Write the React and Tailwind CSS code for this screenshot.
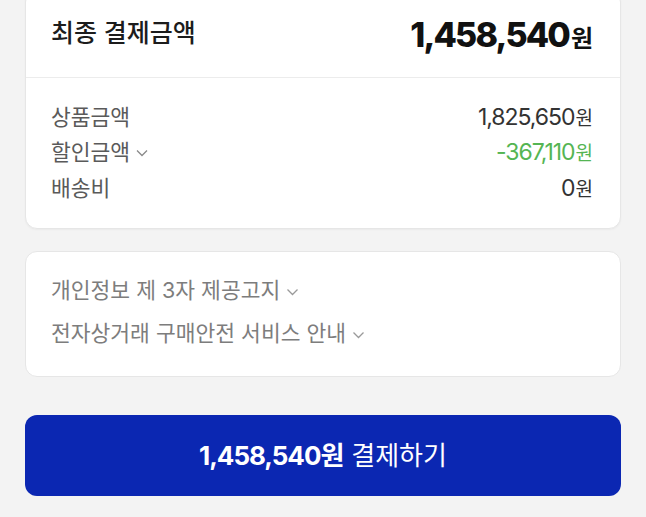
function Chevron({ className }) {
  return (
    <svg viewBox="0 0 12 8" className={className} fill="none" stroke="currentColor" strokeWidth="1.3">
      <polyline points="1,1.5 6,6.5 11,1.5" />
    </svg>
  );
}

function Row({ label, value, valueClass, chevron }) {
  return (
    <div className="flex items-center justify-between h-[35.5px]">
      <div className="flex items-center text-[21.5px] text-[#5a5a5a]">
        {label}
        {chevron && <Chevron className="w-[12px] h-[8px] ml-[6px] mt-[2px] text-[#8a8a8a]" />}
      </div>
      <div className={`flex items-baseline text-[23px] tracking-[-0.045em] ${valueClass}`}>
        {value}
        <span className="text-[19px] tracking-normal ml-[1px]">원</span>
      </div>
    </div>
  );
}

export default function App() {
  return (
    <div
      className="w-[646px] h-[517px] overflow-hidden bg-[#f3f3f3] px-[25px]"
      style={{ fontFamily: "Inter, 'Noto Sans CJK KR', sans-serif" }}
    >
      <div className="-mt-[10px] bg-white rounded-[12px] border border-[#e6e6e6] shadow-[0_1px_2px_rgba(0,0,0,0.04)]">
        <div className="h-[86px] flex items-center justify-between pl-[25px] pr-[27px]">
          <div className="text-[25px] text-[#1c1c1c] font-medium">최종 결제금액</div>
          <div className="flex items-baseline text-[34px] font-extrabold text-[#111] tracking-[-0.055em]">
            1,458,540<span className="text-[24px] font-bold tracking-normal ml-[2px]">원</span>
          </div>
        </div>
        <div className="h-px bg-[#ececec]" />
        <div className="pl-[25px] pr-[27px] pt-[21px] pb-[22px]">
          <Row label="상품금액" value="1,825,650" valueClass="text-[#333]" />
          <Row label="할인금액" value="-367,110" valueClass="text-[#55b553]" chevron />
          <Row label="배송비" value="0" valueClass="text-[#333]" />
        </div>
      </div>

      <div className="mt-[22px] bg-white rounded-[12px] border border-[#e6e6e6] pl-[25px] pr-[27px] pt-[17px] pb-[21px] text-[21.5px] text-[#7d7d7d]">
        <div className="flex items-center h-[43px]">
          개인정보 제 3자 제공고지
          <Chevron className="w-[13px] h-[8px] ml-[6px] mt-[3px] text-[#9a9a9a]" />
        </div>
        <div className="flex items-center h-[43px]">
          전자상거래 구매안전 서비스 안내
          <Chevron className="w-[13px] h-[8px] ml-[6px] mt-[3px] text-[#9a9a9a]" />
        </div>
      </div>

      <div className="mt-[38px] h-[81px] rounded-[12px] bg-[#0b27b2] flex items-center justify-center text-white text-[26px]">
        <span className="font-bold tracking-[-0.04em]">1,458,540원</span>
        <span className="ml-[8px]">결제하기</span>
      </div>
    </div>
  );
}
